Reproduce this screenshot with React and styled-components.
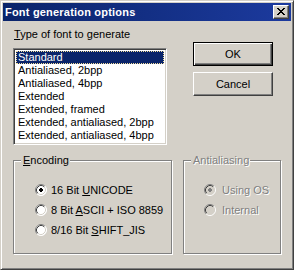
import styled, { createGlobalStyle } from 'styled-components';

const GlobalStyle = createGlobalStyle`
    html, body {
        margin: 0;
        padding: 0;
        background: #d4d0c8;
    }
    * {
        box-sizing: border-box;
    }
`;

const Window = styled.div`
    width: 294px;
    height: 270px;
    padding: 2px;
    background: #d4d0c8;
    border: 1px solid;
    border-color: #d4d0c8 #404040 #404040 #d4d0c8;
    box-shadow: inset 1px 1px 0 #fff, inset -1px -1px 0 #808080;
    font-family: 'Liberation Sans', Arial, sans-serif;
    font-size: 11px;
    color: #000;
    display: flex;
    flex-direction: column;
`;

const TitleBar = styled.div`
    height: 18px;
    flex: none;
    display: flex;
    align-items: center;
    justify-content: space-between;
    padding: 0 2px;
    background: linear-gradient(to right, #0a246a, #1c3a9e);
`;

const Title = styled.span`
    color: #fff;
    font-weight: bold;
    font-size: 11px;
    letter-spacing: 0.2px;
`;

const CloseButton = styled.div`
    width: 16px;
    height: 14px;
    background: #d4d0c8;
    border: 1px solid;
    border-color: #fff #404040 #404040 #fff;
    box-shadow: inset -1px -1px 0 #808080;
    display: flex;
    align-items: center;
    justify-content: center;
    padding: 0 1px 1px 0;
`;

const Body = styled.div`
    flex: 1;
    padding: 7px 10px 0 10px;
    display: flex;
    flex-direction: column;
`;

const TopRow = styled.div`
    display: flex;
    gap: 26px;
`;

const LeftColumn = styled.div`
    width: 154px;
    display: flex;
    flex-direction: column;
    gap: 7px;
`;

const Label = styled.div`
    height: 13px;
    line-height: 13px;
    padding-left: 1px;
`;

const Mnemonic = styled.span`
    text-decoration: underline;
    text-underline-offset: 1px;
`;

const ListBox = styled.div`
    height: 97px;
    background: #fff;
    border: 1px solid;
    border-color: #808080 #fff #fff #808080;
    box-shadow: inset 1px 1px 0 #404040, inset -1px -1px 0 #d4d0c8;
    padding: 2px;
`;

const ListItem = styled.div`
    height: 13px;
    line-height: 13px;
    padding-left: 2px;
    white-space: nowrap;
    background: ${(props) => (props.selected ? '#0a246a' : 'transparent')};
    color: ${(props) => (props.selected ? '#fff' : '#000')};
    outline: ${(props) => (props.selected ? '1px dotted #f3df9c' : 'none')};
    outline-offset: -1px;
`;

const ButtonColumn = styled.div`
    width: 80px;
    margin-top: 14px;
    display: flex;
    flex-direction: column;
    gap: 6px;
`;

const Button = styled.div`
    height: 24px;
    display: flex;
    align-items: center;
    justify-content: center;
    background: #d4d0c8;
    border: 1px solid;
    border-color: ${(props) => (props.isDefault ? '#000' : '#fff #404040 #404040 #fff')};
    box-shadow: ${(props) =>
        props.isDefault
            ? 'inset 1px 1px 0 #fff, inset -1px -1px 0 #404040, inset -2px -2px 0 #808080'
            : 'inset -1px -1px 0 #808080, inset 1px 1px 0 #d4d0c8'};
    padding-bottom: 1px;
`;

const BottomRow = styled.div`
    margin-top: 15px;
    display: flex;
    gap: 11px;
`;

const GroupBox = styled.div`
    position: relative;
    width: ${(props) => props.width}px;
    height: 94px;
    border: 1px solid #808080;
    box-shadow: inset 1px 1px 0 #fff, 1px 1px 0 #fff;
    padding: ${(props) => props.pad};
    display: flex;
    flex-direction: column;
    gap: 8px;
`;

const Legend = styled.span`
    position: absolute;
    top: -7px;
    left: 7px;
    padding: 0 1px 0 2px;
    line-height: 13px;
    background: #d4d0c8;
    color: ${(props) => (props.disabled ? '#808080' : '#000')};
    text-shadow: ${(props) => (props.disabled ? '1px 1px 0 #fff' : 'none')};
`;

const RadioRow = styled.div`
    height: 12px;
    display: flex;
    align-items: center;
    gap: ${(props) => props.gap}px;
    white-space: nowrap;
    color: ${(props) => (props.disabled ? '#808080' : '#000')};
    text-shadow: ${(props) => (props.disabled ? '1px 1px 0 #fff' : 'none')};
`;

function CloseGlyph() {
    const rows = [
        [0, 6],
        [1, 5],
        [2, 4],
        [3],
        [2, 4],
        [1, 5],
        [0, 6],
    ];
    return (
        <svg width="8" height="7" viewBox="0 0 8 7" shapeRendering="crispEdges">
            {rows.map((xs, y) => xs.map((x) => <rect key={y + '-' + x} x={x} y={y} width="2" height="1" fill="#000" />))}
        </svg>
    );
}

function Radio({ checked, disabled }) {
    const fill = disabled ? '#d4d0c8' : '#fff';
    const dot = disabled ? '#808080' : '#000';
    return (
        <svg width="12" height="12" viewBox="0 0 12 12" style={{ flex: 'none' }}>
            <circle cx="6" cy="6" r="5.5" fill={fill} />
            <path d="M2.11 9.89 A5.5 5.5 0 0 1 9.89 2.11" fill="none" stroke="#808080" />
            <path d="M9.89 2.11 A5.5 5.5 0 0 1 2.11 9.89" fill="none" stroke="#fff" />
            <path d="M2.82 9.18 A4.5 4.5 0 0 1 9.18 2.82" fill="none" stroke="#404040" />
            <path d="M9.18 2.82 A4.5 4.5 0 0 1 2.82 9.18" fill="none" stroke="#d4d0c8" />
            {checked && (
                <g fill={dot} shapeRendering="crispEdges">
                    <rect x="5" y="4" width="2" height="4" />
                    <rect x="4" y="5" width="4" height="2" />
                </g>
            )}
        </svg>
    );
}

const fontTypes = [
    'Standard',
    'Antialiased, 2bpp',
    'Antialiased, 4bpp',
    'Extended',
    'Extended, framed',
    'Extended, antialiased, 2bpp',
    'Extended, antialiased, 4bpp',
];

function App() {
    return (
        <>
            <GlobalStyle />
            <Window>
                <TitleBar>
                    <Title>Font generation options</Title>
                    <CloseButton>
                        <CloseGlyph />
                    </CloseButton>
                </TitleBar>
                <Body>
                    <TopRow>
                        <LeftColumn>
                            <Label>
                                <Mnemonic>T</Mnemonic>ype of font to generate
                            </Label>
                            <ListBox>
                                {fontTypes.map((name, index) => (
                                    <ListItem key={index} selected={index === 0}>
                                        {name}
                                    </ListItem>
                                ))}
                            </ListBox>
                        </LeftColumn>
                        <ButtonColumn>
                            <Button isDefault>OK</Button>
                            <Button>Cancel</Button>
                        </ButtonColumn>
                    </TopRow>
                    <BottomRow>
                        <GroupBox width={159} pad="23px 0 0 21px">
                            <Legend>
                                <Mnemonic>E</Mnemonic>ncoding
                            </Legend>
                            <RadioRow gap={4}>
                                <Radio checked />
                                <span>
                                    16 Bit <Mnemonic>U</Mnemonic>NICODE
                                </span>
                            </RadioRow>
                            <RadioRow gap={4}>
                                <Radio />
                                <span>
                                    8 Bit <Mnemonic>A</Mnemonic>SCII + ISO 8859
                                </span>
                            </RadioRow>
                            <RadioRow gap={4}>
                                <Radio />
                                <span>
                                    8/16 Bit <Mnemonic>S</Mnemonic>HIFT_JIS
                                </span>
                            </RadioRow>
                        </GroupBox>
                        <GroupBox width={98} pad="23px 0 0 20px">
                            <Legend disabled>Antialiasing</Legend>
                            <RadioRow gap={6} disabled>
                                <Radio checked disabled />
                                <span>Using OS</span>
                            </RadioRow>
                            <RadioRow gap={6} disabled>
                                <Radio disabled />
                                <span>Internal</span>
                            </RadioRow>
                        </GroupBox>
                    </BottomRow>
                </Body>
            </Window>
        </>
    );
}

export default App;
